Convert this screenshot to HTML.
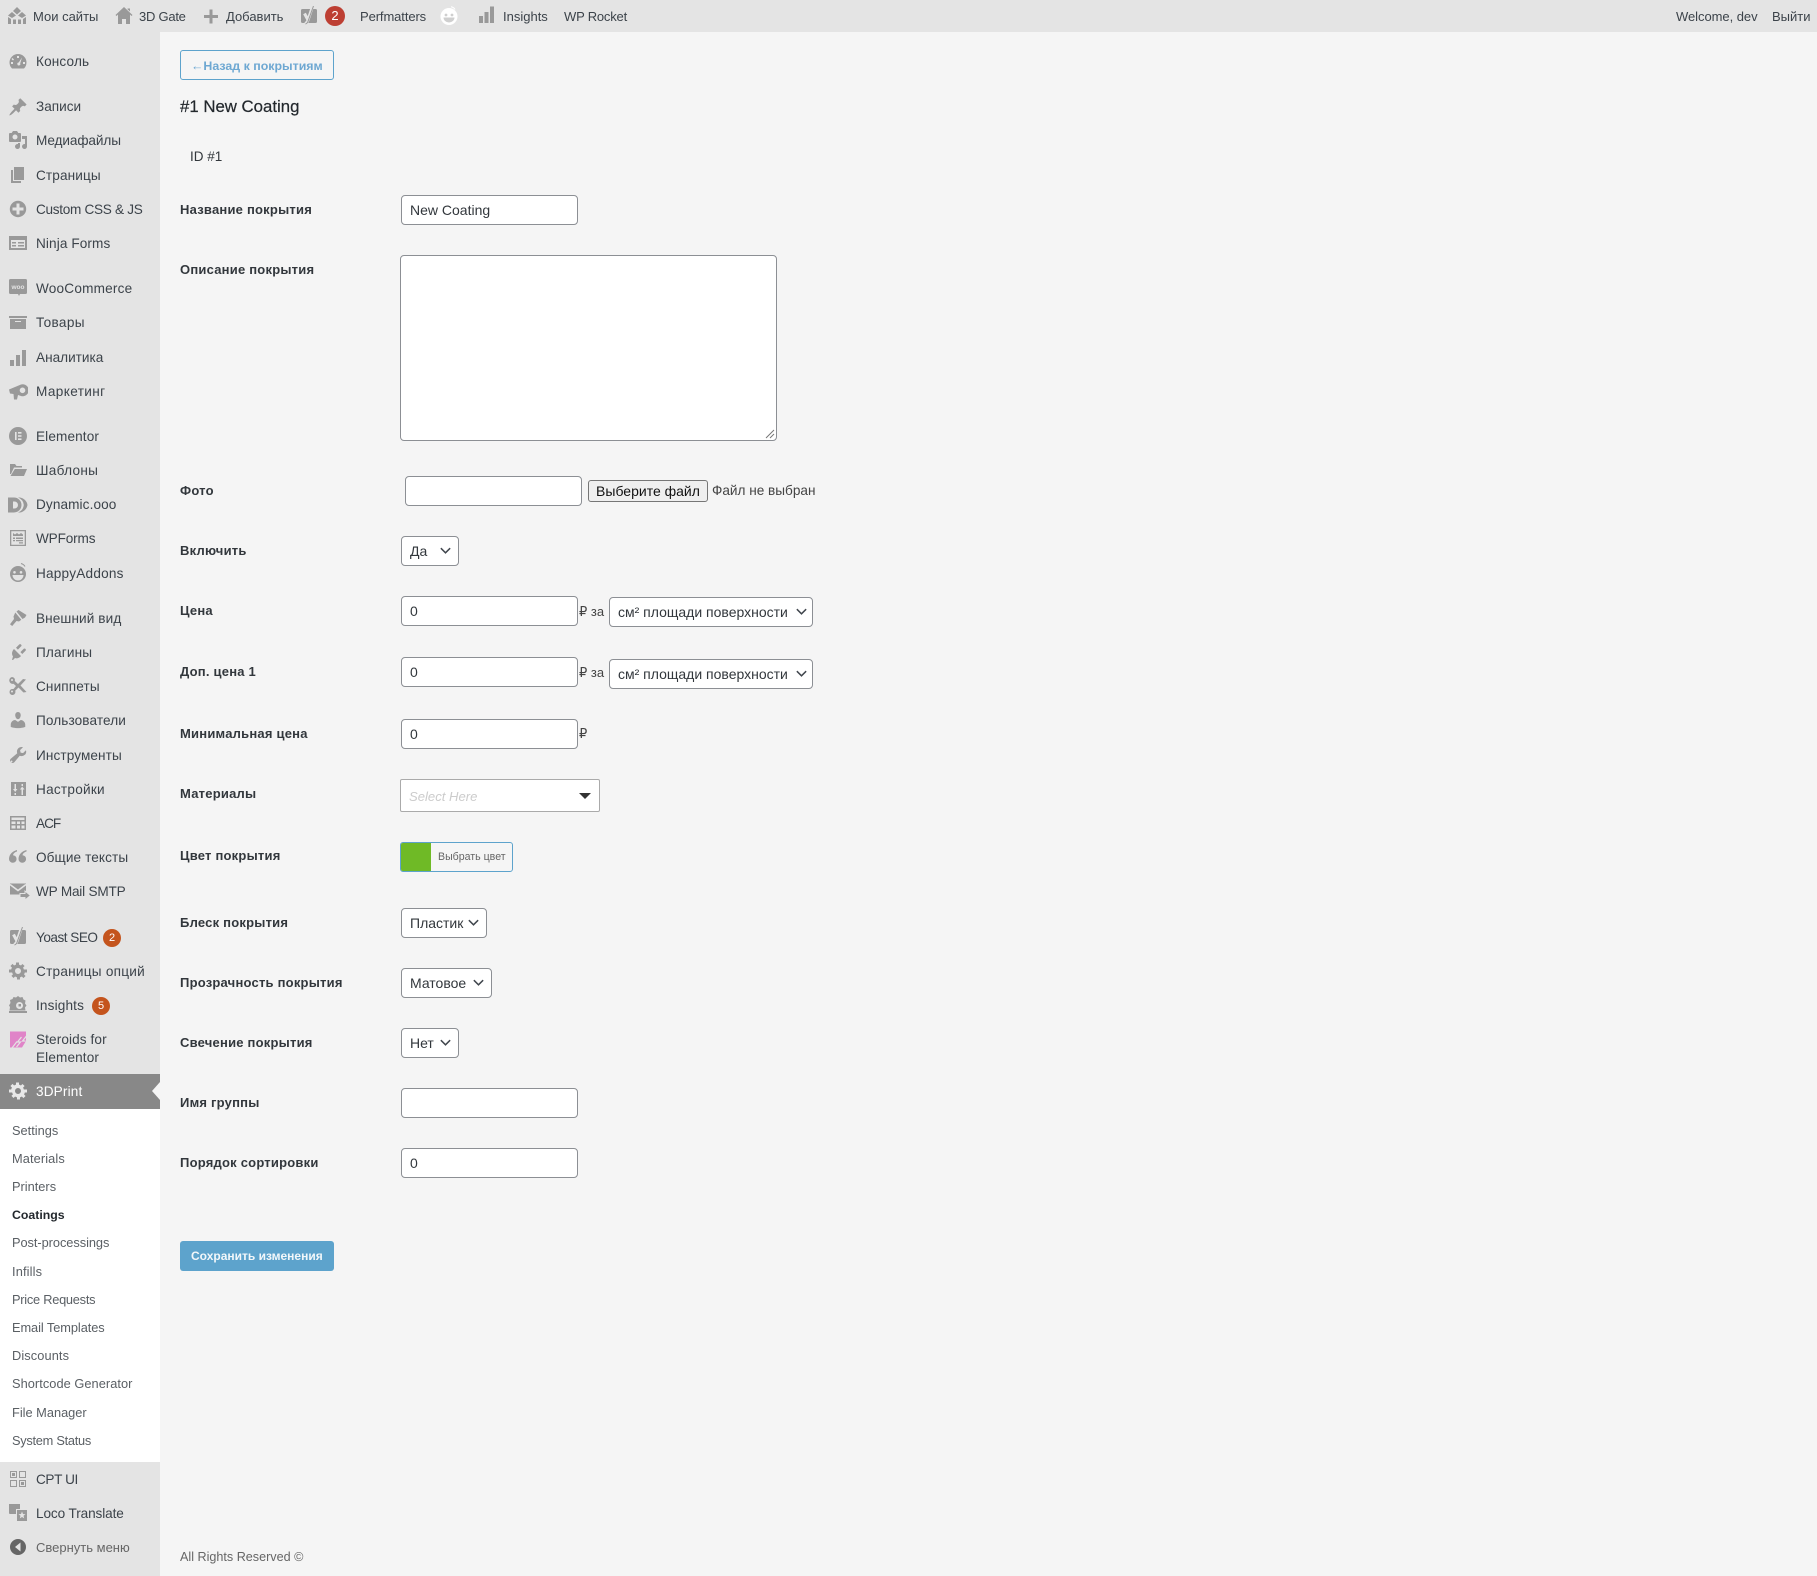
<!DOCTYPE html>
<html lang="ru"><head><meta charset="utf-8"><title>3DPrint</title>
<style>
html,body{margin:0;padding:0;width:1817px;height:1576px;overflow:hidden;background:#f5f5f5;font-family:"Liberation Sans","DejaVu Sans",sans-serif;color:#3c434a}
.a{position:absolute}
#bar{left:0;top:0;width:1817px;height:32px;background:#e4e4e4}
#side{left:0;top:32px;width:160px;height:1544px;background:#e4e4e4}
#sub{left:0;top:1109px;width:160px;height:353px;background:#fff}
#cur{left:0;top:1074px;width:160px;height:35px;background:#888}
.t{position:absolute;white-space:nowrap;line-height:20px;height:20px}
.b{font-size:13px;color:#3c434a;top:7px}
.m{font-size:13.6px;color:#3c434a;left:36px}
.s{font-size:12.8px;color:#5a5f64;left:12px}
.l{font-size:13px;font-weight:bold;color:#32373c;left:180px;letter-spacing:.22px}
.i{position:absolute;box-sizing:border-box;background:#fff;border:1px solid #8c8f94;border-radius:4px;font-size:14px;line-height:28px;padding-left:8px;color:#32373c;white-space:nowrap}
.i svg{position:absolute;top:7px;width:13px;height:13px;fill:none;stroke:#40464d;stroke-width:1.6}
svg.ic{position:absolute;width:20px;height:20px;fill:#999}
.bd{position:absolute;width:18px;height:18px;border-radius:50%;background:#c4541d;color:#fff;font-size:11px;line-height:18px;text-align:center}
</style></head><body>
<div class="a" id="side"></div>
<div class="a" id="bar"></div>
<div class="a" id="cur"></div>
<div class="a" id="sub"></div>
<div class="a" style="left:152px;top:1082px;width:0;height:0;border:9px solid transparent;border-right:8px solid #f5f5f5;border-left:0"></div>

<!-- admin bar -->
<svg class="ic" style="left:7px;top:6px" viewBox="0 0 20 20"><path d="M10 1l4 4-4 3.500L6 5zM5 6l4 3.500L5 12 1 9.500zM15 6l4 3.500-4 2.500-4-2.500zM1 11l3 2v5H1zM6 13.500h3V18H6zM11 13.500h3V18h-3zM16 13l3-2v7h-3z"/></svg>
<div class="t b" style="left:33px">Мои сайты</div>
<svg class="ic" style="left:114px;top:6px" viewBox="0 0 20 20"><path d="M16 8.500l1.500 1.500 1-1L10 1 1.500 9l1 1L4 8.500V18h4v-5h4v5h4zM13.500 2.500H16v3l-2.500-2.300z"/></svg>
<div class="t b" style="left:139px;letter-spacing:-.25px">3D Gate</div>
<svg class="ic" style="left:201px;top:7px" viewBox="0 0 20 20"><path d="M17 8v3h-5.500v5.500h-3V11H3V8h5.500V2.500h3V8z"/></svg>
<div class="t b" style="left:226px">Добавить</div>
<svg class="ic" style="left:299px;top:6px" viewBox="0 0 20 20"><path d="M3.500 3h13A1.500 1.500 0 0 1 18 4.500v11a1.500 1.500 0 0 1-1.500 1.500h-13A1.500 1.500 0 0 1 2 15.500v-11A1.500 1.500 0 0 1 3.500 3z"/><path d="M5.500 7.500l3.500 6.500c-.5 2-1.500 3-3 3.500M9 14l4.500-13.500" fill="none" stroke="#e4e4e4" stroke-width="3"/><path d="M14.500 0L9.500 14c-.6 2.300-1.700 3.600-3 4" fill="none" stroke="#999" stroke-width="1"/></svg>
<div class="a" style="left:325px;top:6px;width:20px;height:20px;border-radius:50%;background:#bd3f33;color:#fff;font-size:13px;line-height:20px;text-align:center">2</div>
<div class="t b" style="left:360px;letter-spacing:-.1px">Perfmatters</div>
<svg class="ic" style="left:439px;top:6px;fill:#fff" viewBox="0 0 20 20"><circle cx="10" cy="10.500" r="8.500"/><circle cx="7" cy="9" r="1.400" fill="#cfcfcf"/><circle cx="13" cy="9" r="1.400" fill="#cfcfcf"/><path d="M4.500 11.500h11a5.500 5 0 0 1-11 0z" fill="#cfcfcf"/><path d="M12 .8c1.800.3 3.200 1.200 4 2.700" fill="none" stroke="#fff"/></svg>
<svg class="ic" style="left:476px;top:5px" viewBox="0 0 20 20"><path d="M3 11h4v7H3zM8.500 7h4v11h-4zM14 1.500h4V18h-4z"/></svg>
<div class="t b" style="left:503px">Insights</div>
<div class="t b" style="left:564px;letter-spacing:-.2px">WP Rocket</div>
<div class="t b" style="left:1676px;letter-spacing:-.05px">Welcome, dev</div>
<div class="t b" style="left:1772px">Выйти</div>

<!-- side icons -->
<svg class="ic" style="left:8px;top:52px" viewBox="0 0 20 20"><path fill-rule="evenodd" d="M10 2a8.500 8.500 0 0 1 8.500 8.500c0 2.400-1 4.500-2.500 6H4a8.500 8.500 0 0 1-2.500-6A8.500 8.500 0 0 1 10 2zM9 4v2h2V4zM4.500 6l-1 1 1.500 1.500 1-1zM3 10v2h2v-2zM15 10v2h2v-2zM14 5.500l-3.300 5a1.500 1.500 0 1 0 1.500.9z"/></svg>
<svg class="ic" style="left:8px;top:97px" viewBox="0 0 20 20"><path d="M10.440 3.020l1.820-1.820 6.360 6.350-1.830 1.820c-1.050-.68-2.480-.57-3.410.36l-.75.75c-.92.930-1.040 2.350-.35 3.410l-1.830 1.820-2.410-2.410-2.800 2.790c-.42.420-3.380 2.710-3.800 2.290s1.860-3.390 2.280-3.810l2.790-2.790L4.100 9.360l1.830-1.820c1.050.69 2.480.57 3.400-.36l.75-.75c.93-.92 1.050-2.350.36-3.410z"/></svg>
<svg class="ic" style="left:8px;top:130px" viewBox="0 0 20 20"><path fill-rule="evenodd" d="M13 11V4c0-.55-.45-1-1-1h-1.670L9 1H5L3.670 3H2c-.55 0-1 .45-1 1v7c0 .55.45 1 1 1h10c.55 0 1-.45 1-1zM7 4.500a2.500 2.500 0 1 1 0 5 2.500 2.500 0 0 1 0-5zM14 6h5v10.500a2.500 2.500 0 1 1-2-2.450V9h-3zM10 14.050V13h2v3.500a2.500 2.500 0 1 1-2-2.450z"/></svg>
<svg class="ic" style="left:8px;top:165px" viewBox="0 0 20 20"><path d="M6 15V2h10v13zM5 16h8v2H3V5h2z"/></svg>
<svg class="ic" style="left:8px;top:199px" viewBox="0 0 20 20"><path d="M15.800 4.200c3.200 3.210 3.200 8.390 0 11.600-3.210 3.200-8.390 3.200-11.600 0C1 12.590 1 7.410 4.200 4.200 7.410 1 12.590 1 15.800 4.200zm-4.300 11.300v-4h4v-3h-4v-4h-3v4h-4v3h4v4h3z"/></svg>
<svg class="ic" style="left:8px;top:233px" viewBox="0 0 20 20"><path fill-rule="evenodd" d="M1 3h18v14H1zM3 7v8h14V7zM4 9h4v1.500H4zM4 12h4v1.500H4zM10 9h6v1.500h-6zM10 12h6v1.500h-6z"/></svg>
<svg class="ic" style="left:8px;top:278px" viewBox="0 0 20 20"><path d="M2.500 1h15A1.500 1.500 0 0 1 19 2.500v12a1.500 1.500 0 0 1-1.500 1.500H12l-1 2-1-2H2.500A1.500 1.500 0 0 1 1 14.500v-12A1.500 1.500 0 0 1 2.500 1z"/><text x="10" y="11" font-size="6.500" font-weight="bold" fill="#e4e4e4" text-anchor="middle">woo</text></svg>
<svg class="ic" style="left:8px;top:312px" viewBox="0 0 20 20"><path d="M19 4v2H1V4zM2 7h16v10H2zm11 3V9H7v1z"/></svg>
<svg class="ic" style="left:8px;top:348px" viewBox="0 0 20 20"><path d="M18 18V2h-4v16zm-6 0V7H8v11zm-6 0v-6H2v6z"/></svg>
<svg class="ic" style="left:8px;top:381px" viewBox="0 0 20 20"><path fill-rule="evenodd" d="M1 8.500L13 3.500a6 6 0 1 1 0 11.500l-3-1-1 4.500H6L5.500 13 2 12.500zM14.500 6.500a2.800 2.800 0 1 0 0 5.600 2.800 2.800 0 0 0 0-5.600z"/></svg>
<svg class="ic" style="left:8px;top:426px" viewBox="0 0 20 20"><path fill-rule="evenodd" d="M10 1a9 9 0 1 1 0 18 9 9 0 0 1 0-18zM7 6v8h1.600V6zM10 6v1.600h3.500V6zM10 9.200v1.600h3.500V9.200zM10 12.400V14h3.500v-1.600z"/></svg>
<svg class="ic" style="left:8px;top:460px" viewBox="0 0 20 20"><path d="M2 4h5l1.500 2H14v1.500H6L3 14H2zM6.800 9H19l-3 7H2.500z"/></svg>
<svg class="ic" style="left:8px;top:495px" viewBox="0 0 20 20"><path fill-rule="evenodd" d="M0 2.500h6a7.500 7.500 0 0 1 0 15H0zM5 6.500v7h1.500a3.500 3.500 0 0 0 0-7z"/><path d="M10 2.500h2a9 9 0 0 1 7.500 7.500 9 9 0 0 1-7.500 7.500h-2a9 9 0 0 0 5.800-7.500A9 9 0 0 0 10 2.500z"/></svg>
<svg class="ic" style="left:8px;top:528px" viewBox="0 0 20 20"><path fill-rule="evenodd" d="M2 2h16v16H2zM3.300 3.300v13.400h13.400V3.300zM5 5l2 1.500L9 5l2 1.500L13 5l2 1.500V8H5zM5 9.500h2V11H5zM8 9.500h7V11H8zM5 12h2v1.300H5zM8 12h7v1.300H8zM11 14.300h4v1.200h-4z"/></svg>
<svg class="ic" style="left:8px;top:563px" viewBox="0 0 20 20"><path fill-rule="evenodd" d="M10 3a8 8 0 1 1 0 16 8 8 0 0 1 0-16zM6.500 8a1.300 1.300 0 1 0 0 2.600 1.300 1.300 0 0 0 0-2.600zM13 8a1.300 1.300 0 1 0 0 2.600A1.300 1.300 0 0 0 13 8zM4.500 12a5.500 5.500 0 0 0 11 0z"/><path d="M13 .5c1.800.5 3.200 1.500 4 3" fill="none" stroke="#999"/></svg>
<svg class="ic" style="left:8px;top:608px" viewBox="0 0 20 20"><path d="M14.500 11l-6-7.500 2-1.500 8 5-1.500 2.500zM7.300 4.500l6 7.300-2.300 1.700-2.500-.5-4.300 5L2 16.300 6 11l-.5-2.500z"/></svg>
<svg class="ic" style="left:8px;top:642px" viewBox="0 0 20 20"><path d="M13.100 4.400L9.900 7.600 8 5.700l3.200-3.200c.6-.6 1.500-.3 2 .2s.5 1.100-.1 1.700zM17.500 8.800l-3.200 3.200-1.900-1.900 3.200-3.200c.6-.6 1.300-.5 1.800 0s.7 1.300.1 1.900zM6 7l7 7c-1.500 1.800-3.500 3-6 2l-2 2-1-.1 1-3.500C3.300 12 4 9 6 7z"/></svg>
<svg class="ic" style="left:8px;top:676px" viewBox="0 0 20 20"><path fill-rule="evenodd" d="M4 1a3 3 0 0 1 2.800 4L10 8l5-5 3 .5-5.500 6 6 6.500-3 .5-5-5-3.300 3.200A3 3 0 1 1 5 13a3 3 0 0 1 .5 0l2.500-3-2.500-2.200A3 3 0 1 1 4 1zm0 2a1 1 0 1 0 0 2 1 1 0 0 0 0-2zm0 11.500a1 1 0 1 0 0 2 1 1 0 0 0 0-2z"/></svg>
<svg class="ic" style="left:8px;top:710px" viewBox="0 0 20 20"><path d="M10 9.250c-2.270 0-2.730-3.440-2.730-3.440C7 4.020 7.820 2 9.970 2c2.160 0 2.980 2.020 2.710 3.810 0 0-.41 3.440-2.680 3.440zm0 2.570L12.720 10c2.390 0 4.520 2.330 4.520 4.530v2.490s-3.650 1.130-7.240 1.130c-3.650 0-7.240-1.130-7.240-1.130v-2.490c0-2.250 1.940-4.480 4.470-4.480z"/></svg>
<svg class="ic" style="left:8px;top:745px" viewBox="0 0 20 20"><path d="M16.680 9.770c-1.340 1.340-3.300 1.670-4.950.99l-5.410 6.520c-.99.990-2.590.990-3.580 0s-.99-2.590 0-3.580l6.520-5.420c-.68-1.650-.35-3.610.99-4.950 1.280-1.280 3.120-1.640 4.720-1.090l-2.900 2.900.53 2.440 2.440.53 2.900-2.900c.55 1.600.19 3.440-1.090 4.720zM3.500 15.500a1 1 0 1 0 1 1 1 1 0 0 0-1-1z"/></svg>
<svg class="ic" style="left:8px;top:779px" viewBox="0 0 20 20"><path fill-rule="evenodd" d="M3 3h15v14H3zM6.500 5v5H5l2.200 3L9.400 10H8V5zM6.500 14v2H8v-2zM13.500 5v2H15V5zM14.200 7.500L12 10.500h1.500V16H15v-5.500h1.500z"/></svg>
<svg class="ic" style="left:8px;top:813px" viewBox="0 0 20 20"><path fill-rule="evenodd" d="M2 3h16v14H2zM3.500 4.500v2.500h13V4.500zM3.500 8.500V11h4V8.500zM9 8.500V11h3V8.500zM13.500 8.500V11h3V8.500zM3.500 12.500v3h4v-3zM9 12.500v3h3v-3zM13.500 12.500v3h3v-3z"/></svg>
<svg class="ic" style="left:8px;top:847px" viewBox="0 0 20 20"><path d="M9 3C5 4 1 7 1 12a3.800 3.800 0 1 0 4-3.800C5.300 6.500 7 5 9 4.500zM18.500 3C14.500 4 10.500 7 10.500 12a3.800 3.800 0 1 0 4-3.800c.3-1.700 2-3.200 4-3.700z"/></svg>
<svg class="ic" style="left:9px;top:881px;width:22px;height:22px" viewBox="0 0 22 22"><path d="M1 2.500h16v11H1z"/><path d="M1 3.500l8 6 8-6" fill="none" stroke="#e4e4e4" stroke-width="1.600"/><path d="M11 12.500h5V10l5.500 4.500L16 19v-2.500h-5z" stroke="#e4e4e4"/></svg>
<svg class="ic" style="left:8px;top:927px" viewBox="0 0 20 20"><path d="M3.500 3h13A1.500 1.500 0 0 1 18 4.500v11a1.500 1.500 0 0 1-1.500 1.500h-13A1.500 1.500 0 0 1 2 15.500v-11A1.500 1.500 0 0 1 3.500 3z"/><path d="M5.500 7.500l3.500 6.500c-.5 2-1.500 3-3 3.500M9 14l4.500-13.500" fill="none" stroke="#e4e4e4" stroke-width="3"/><path d="M14.500 0L9.500 14c-.6 2.300-1.700 3.600-3 4" fill="none" stroke="#999" stroke-width="1"/></svg>
<svg class="ic" style="left:8px;top:961px" viewBox="0 0 20 20"><path transform="translate(1 -.5)" fill-rule="evenodd" d="M18 12h-2.180c-.17.700-.44 1.350-.81 1.930l1.540 1.540-2.120 2.120-1.540-1.540c-.58.360-1.230.640-1.910.810V19H8v-2.180c-.68-.17-1.330-.45-1.910-.81l-1.540 1.540-2.120-2.120 1.540-1.540c-.36-.58-.63-1.230-.8-1.910H0V9h2.180c.17-.68.44-1.330.8-1.910L1.440 5.550l2.120-2.120L5.100 4.970c.58-.36 1.230-.63 1.910-.8V2h3v2.180c.68.170 1.330.44 1.910.8l1.540-1.540 2.120 2.120-1.540 1.540c.36.580.63 1.230.8 1.910H18zM9 13.500a3 3 0 1 0 0-6 3 3 0 0 0 0 6z"/></svg>
<svg class="ic" style="left:8px;top:995px" viewBox="0 0 20 20"><path fill-rule="evenodd" d="M10 1l2 1.500 2.500-.5 1 2.500 2 1-.5 3 1.500 2-1.500 2 .5 3H1.500L2 12 1 10.500 2.500 8 2 5l2.500-1L5.500 2 8 2.500zM11.500 7a3.500 3.500 0 1 0 0 7 3.500 3.500 0 0 0 0-7z"/><path d="M1 16h18v2H1zM10.500 9h2.500v2.500h-2.500z"/></svg>
<svg class="ic" style="left:8px;top:1030px" viewBox="0 0 20 20"><path d="M2 1.500h16V11l-4 6.500H2z" style="fill:#e084c8"/><path d="M18.500 6l-4 5h3M13.500 7l-4 5h3l-4 5M9 11.500l-5 6.500" fill="none" stroke="#e4e4e4" stroke-width="1.200"/></svg>
<svg class="ic" style="left:8px;top:1081px;fill:#e8e8e8" viewBox="0 0 20 20"><path transform="translate(1 -.5)" fill-rule="evenodd" d="M18 12h-2.180c-.17.700-.44 1.350-.81 1.930l1.540 1.540-2.120 2.120-1.540-1.540c-.58.360-1.230.640-1.910.810V19H8v-2.180c-.68-.17-1.330-.45-1.910-.81l-1.540 1.540-2.120-2.120 1.540-1.540c-.36-.58-.63-1.230-.8-1.910H0V9h2.180c.17-.68.44-1.330.8-1.910L1.440 5.550l2.120-2.120L5.100 4.970c.58-.36 1.230-.63 1.910-.8V2h3v2.180c.68.170 1.330.44 1.910.8l1.540-1.540 2.120 2.120-1.540 1.540c.36.580.63 1.230.8 1.910H18zM9 13.500a3 3 0 1 0 0-6 3 3 0 0 0 0 6z"/></svg>
<svg class="ic" style="left:8px;top:1469px" viewBox="0 0 20 20"><path fill-rule="evenodd" d="M2 2h7v7H2zM3 3v5h5V3zM11 2h7v7h-7zM12 3v5h5V3zM2 11h7v7H2zM3 12v5h5v-5zM11 11h7v7h-7zM12 12v5h5v-5z"/><path d="M4 4h3v3H4zM13 13h3v3h-3z"/></svg>
<svg class="ic" style="left:8px;top:1503px;width:20px;height:20px" viewBox="0 0 20 20"><path d="M1 1h11v5H8v5H2a1 1 0 0 1-1-1z"/><path fill-rule="evenodd" d="M9 7h10v11H9zM14 8.500l-1 2.500-2.500.2 2 1.600-.7 2.600 2.200-1.400 2.200 1.400-.7-2.600 2-1.600-2.500-.2z"/></svg>
<svg class="ic" style="left:8px;top:1537px;fill:#666" viewBox="0 0 20 20"><path fill-rule="evenodd" d="M10 2a8 8 0 1 1 0 16 8 8 0 0 1 0-16zM12.500 5.500L7 10l5.500 4.500z"/></svg>

<!-- side text -->
<div class="t m" style="top:52px;letter-spacing:.15px">Консоль</div>
<div class="t m" style="top:97px">Записи</div>
<div class="t m" style="top:131px;letter-spacing:-.1px">Медиафайлы</div>
<div class="t m" style="top:166px;letter-spacing:.12px">Страницы</div>
<div class="t m" style="top:200px;letter-spacing:-.3px">Custom CSS &amp; JS</div>
<div class="t m" style="top:234px;letter-spacing:.1px">Ninja Forms</div>
<div class="t m" style="top:279px;letter-spacing:.2px">WooCommerce</div>
<div class="t m" style="top:313px;letter-spacing:.35px">Товары</div>
<div class="t m" style="top:348px">Аналитика</div>
<div class="t m" style="top:382px;letter-spacing:.38px">Маркетинг</div>
<div class="t m" style="top:427px;letter-spacing:.12px">Elementor</div>
<div class="t m" style="top:461px;letter-spacing:.3px">Шаблоны</div>
<div class="t m" style="top:495px;letter-spacing:.1px">Dynamic.ooo</div>
<div class="t m" style="top:529px;letter-spacing:-.15px">WPForms</div>
<div class="t m" style="top:564px;letter-spacing:.2px">HappyAddons</div>
<div class="t m" style="top:609px;letter-spacing:.1px">Внешний вид</div>
<div class="t m" style="top:643px;letter-spacing:.15px">Плагины</div>
<div class="t m" style="top:677px;letter-spacing:.12px">Сниппеты</div>
<div class="t m" style="top:711px;letter-spacing:.1px">Пользователи</div>
<div class="t m" style="top:746px;letter-spacing:.1px">Инструменты</div>
<div class="t m" style="top:780px;letter-spacing:.25px">Настройки</div>
<div class="t m" style="top:814px;letter-spacing:-1px">ACF</div>
<div class="t m" style="top:848px;letter-spacing:.1px">Общие тексты</div>
<div class="t m" style="top:882px;letter-spacing:-.2px">WP Mail SMTP</div>
<div class="t m" style="top:928px;letter-spacing:-.5px">Yoast SEO</div>
<div class="bd" style="left:103px;top:929px">2</div>
<div class="t m" style="top:962px;letter-spacing:.25px">Страницы опций</div>
<div class="t m" style="top:996px;letter-spacing:.15px">Insights</div>
<div class="bd" style="left:92px;top:997px">5</div>
<div class="t m" style="top:1030px;letter-spacing:.1px">Steroids for</div>
<div class="t m" style="top:1048px;letter-spacing:.12px">Elementor</div>
<div class="t m" style="top:1082px;color:#fff;letter-spacing:.15px">3DPrint</div>
<div class="t s" style="top:1121px">Settings</div>
<div class="t s" style="top:1149px;letter-spacing:.1px">Materials</div>
<div class="t s" style="top:1177px">Printers</div>
<div class="t s" style="top:1205px;color:#23282d;font-weight:bold;font-size:12.300px">Coatings</div>
<div class="t s" style="top:1233px;letter-spacing:-.05px">Post-processings</div>
<div class="t s" style="top:1262px;letter-spacing:.15px">Infills</div>
<div class="t s" style="top:1290px;letter-spacing:-.25px">Price Requests</div>
<div class="t s" style="top:1318px;letter-spacing:-.07px">Email Templates</div>
<div class="t s" style="top:1346px;letter-spacing:.1px">Discounts</div>
<div class="t s" style="top:1374px;letter-spacing:.05px">Shortcode Generator</div>
<div class="t s" style="top:1403px">File Manager</div>
<div class="t s" style="top:1431px;letter-spacing:-.27px">System Status</div>
<div class="t m" style="top:1470px;letter-spacing:-.4px">CPT UI</div>
<div class="t m" style="top:1504px;letter-spacing:-.1px">Loco Translate</div>
<div class="t m" style="top:1538px;color:#666;font-size:13px">Свернуть меню</div>

<!-- content -->
<div class="a" style="left:180px;top:50px;width:154px;height:30px;box-sizing:border-box;border:1px solid #5da3cc;border-radius:3px;font-size:12.400px;font-weight:bold;line-height:30px;color:#6ea8d2;padding-left:10px;white-space:nowrap">←Назад к покрытиям</div>
<div class="t" style="left:180px;top:97px;font-size:16.800px;color:#23282d;-webkit-text-stroke:.2px #23282d">#1 New Coating</div>
<div class="t" style="left:190px;top:146px;font-size:13.500px;color:#32373c;line-height:21px">ID #1</div>

<div class="t l" style="top:200px">Название покрытия</div>
<div class="i" style="left:401px;top:195px;width:177px;height:30px">New Coating</div>

<div class="t l" style="top:260px">Описание покрытия</div>
<div class="i" style="left:400px;top:255px;width:377px;height:186px"><svg style="right:1px;top:auto;bottom:1px;width:10px;height:10px;stroke-width:1;stroke:#777" viewBox="0 0 10 10"><path d="M9 1L1 9M9 5L5 9"/></svg></div>

<div class="t l" style="top:481px">Фото</div>
<div class="i" style="left:405px;top:476px;width:177px;height:30px"></div>
<div class="a" style="left:588px;top:480px;width:120px;height:22px;box-sizing:border-box;background:#efefef;border:1px solid #767676;border-radius:3px;font-size:14px;line-height:20px;text-align:center;color:#111;white-space:nowrap">Выберите файл</div>
<div class="t" style="left:712px;top:481px;font-size:13.600px;color:#444">Файл не выбран</div>

<div class="t l" style="top:541px">Включить</div>
<div class="i" style="left:401px;top:536px;width:58px;height:30px">Да<svg style="right:6px" viewBox="0 0 14 14"><path d="M2 4.500l5 5 5-5"/></svg></div>

<div class="t l" style="top:601px">Цена</div>
<div class="i" style="left:401px;top:596px;width:177px;height:30px">0</div>
<div class="t" style="left:579px;top:602px;font-size:13px;color:#444">₽ за</div>
<div class="i" style="left:609px;top:597px;width:204px;height:30px">см² площади поверхности<svg style="right:4px" viewBox="0 0 14 14"><path d="M2 4.500l5 5 5-5"/></svg></div>

<div class="t l" style="top:662px">Доп. цена 1</div>
<div class="i" style="left:401px;top:657px;width:177px;height:30px">0</div>
<div class="t" style="left:579px;top:663px;font-size:13px;color:#444">₽ за</div>
<div class="i" style="left:609px;top:659px;width:204px;height:30px">см² площади поверхности<svg style="right:4px" viewBox="0 0 14 14"><path d="M2 4.500l5 5 5-5"/></svg></div>

<div class="t l" style="top:724px">Минимальная цена</div>
<div class="i" style="left:401px;top:719px;width:177px;height:30px">0</div>
<div class="t" style="left:579px;top:724px;font-size:13px;color:#444">₽</div>

<div class="t l" style="top:784px">Материалы</div>
<div class="a" style="left:400px;top:779px;width:200px;height:33px;box-sizing:border-box;background:#fff;border:1px solid #aaa;border-radius:2px"></div>
<div class="t" style="left:409px;top:787px;font-size:13.100px;font-style:italic;color:#ccc">Select Here</div>
<div class="a" style="left:579px;top:793px;width:0;height:0;border-left:6px solid transparent;border-right:6px solid transparent;border-top:6px solid #333"></div>

<div class="t l" style="top:846px">Цвет покрытия</div>
<div class="a" style="left:400px;top:842px;width:113px;height:30px;box-sizing:border-box;border:1px solid #5da3cc;border-radius:3px;background:#f5f5f5;overflow:hidden"><div class="a" style="left:0;top:0;width:30px;height:28px;background:#6fba26"></div><div class="t" style="left:37px;top:4px;font-size:10.600px;color:#666">Выбрать цвет</div></div>

<div class="t l" style="top:913px">Блеск покрытия</div>
<div class="i" style="left:401px;top:908px;width:86px;height:30px">Пластик<svg style="right:6px" viewBox="0 0 14 14"><path d="M2 4.500l5 5 5-5"/></svg></div>

<div class="t l" style="top:973px">Прозрачность покрытия</div>
<div class="i" style="left:401px;top:968px;width:91px;height:30px">Матовое<svg style="right:6px" viewBox="0 0 14 14"><path d="M2 4.500l5 5 5-5"/></svg></div>

<div class="t l" style="top:1033px">Свечение покрытия</div>
<div class="i" style="left:401px;top:1028px;width:58px;height:30px">Нет<svg style="right:6px" viewBox="0 0 14 14"><path d="M2 4.500l5 5 5-5"/></svg></div>

<div class="t l" style="top:1093px">Имя группы</div>
<div class="i" style="left:401px;top:1088px;width:177px;height:30px"></div>

<div class="t l" style="top:1153px">Порядок сортировки</div>
<div class="i" style="left:401px;top:1148px;width:177px;height:30px">0</div>

<div class="a" style="left:180px;top:1241px;width:154px;height:30px;background:#5da3cc;border-radius:3px;color:#f2f7fa;font-size:12px;font-weight:bold;line-height:31px;padding-left:11px;box-sizing:border-box;white-space:nowrap">Сохранить изменения</div>

<div class="t" style="left:180px;top:1547px;font-size:12.600px;color:#666">All Rights Reserved ©</div>
</body></html>
